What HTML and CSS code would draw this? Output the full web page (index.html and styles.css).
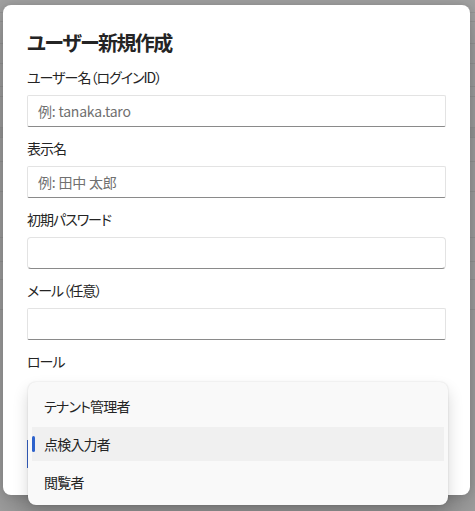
FILE: index.html
```html
<!DOCTYPE html>
<html lang="ja">
<head>
<meta charset="utf-8">
<title>ユーザー新規作成</title>
<link rel="stylesheet" href="styles.css">
</head>
<body>
<div class="page">
  <div class="bg-table">
    <div class="bg-row h13"></div>
    <div class="bg-row h9"></div>
    <div class="bg-row h22"></div>
    <div class="bg-row h20"></div>
    <div class="bg-row h23"></div>
    <div class="bg-row h10"></div>
    <div class="bg-row h31"></div>
    <div class="bg-row h10 dark"></div>
    <div class="bg-row h24"></div>
    <div class="bg-row h30"></div>
    <div class="bg-row h46"></div>
    <div class="bg-row h24"></div>
    <div class="bg-row h18"></div>
    <div class="bg-row h30"></div>
  </div>

  <div class="dialog" role="dialog" aria-label="ユーザー新規作成">
    <h2 class="title">ユーザー新規作成</h2>

    <div class="field">
      <label class="label">ユーザー名（ログインID）</label>
      <div class="input"><span class="placeholder">例: tanaka.taro</span></div>
    </div>

    <div class="field">
      <label class="label">表示名</label>
      <div class="input"><span class="placeholder">例: 田中 太郎</span></div>
    </div>

    <div class="field">
      <label class="label">初期パスワード</label>
      <div class="input rounded"></div>
    </div>

    <div class="field">
      <label class="label">メール（任意）</label>
      <div class="input"></div>
    </div>

    <div class="field">
      <label class="label">ロール</label>
      <div class="dropdown"></div>
    </div>

    <div class="actions">
      <div class="primary-btn" aria-label="作成"></div>
    </div>
  </div>

  <div class="menu" role="listbox">
    <div class="option">テナント管理者</div>
    <div class="option active"><span class="indicator"></span>点検入力者</div>
    <div class="option">閲覧者</div>
  </div>
</div>
</body>
</html>
```

FILE: styles.css
```css
* { box-sizing: border-box; }

html, body {
  margin: 0;
  padding: 0;
}

body {
  width: 475px;
  height: 511px;
  overflow: hidden;
  background: #a1a1a1;
  font-family: "Noto Sans CJK JP", "Noto Sans", sans-serif;
  font-feature-settings: "palt";
  color: #242424;
}

.page {
  position: relative;
  width: 475px;
  height: 511px;
}

.bg-table {
  display: flex;
  flex-direction: column;
}

.bg-row {
  border-bottom: 1px solid #969696;
}
.bg-row.dark { background: #9a9a9a; }
.h9 { height: 9px; }
.h10 { height: 10px; }
.h13 { height: 13px; }
.h18 { height: 18px; }
.h20 { height: 20px; }
.h22 { height: 22px; }
.h23 { height: 23px; }
.h24 { height: 24px; }
.h30 { height: 30px; }
.h31 { height: 31px; }
.h46 { height: 46px; }

.dialog {
  position: absolute;
  left: 3px;
  top: 5px;
  width: 467px;
  height: 490px;
  background: #ffffff;
  border-radius: 8px;
  padding: 24px;
  box-shadow: 0 0 8px rgba(0,0,0,0.12), 0 14px 28px rgba(0,0,0,0.22);
  display: flex;
  flex-direction: column;
}

.title {
  margin: 0 0 10px;
  font-size: 20px;
  line-height: 28px;
  font-weight: 700;
  letter-spacing: -1.6px;
}

.field {
  display: flex;
  flex-direction: column;
  margin-bottom: 11px;
}

.label {
  font-size: 14px;
  line-height: 20px;
  margin-bottom: 8px;
  letter-spacing: -1px;
}

.input {
  height: 32px;
  border: 1px solid #e3e3e3;
  border-bottom-color: #8a8a8a;
  border-radius: 2px;
  display: flex;
  align-items: center;
  padding: 0 10px;
}
.input.rounded { border-radius: 4px; }

.placeholder {
  font-size: 14px;
  color: #707070;
  letter-spacing: -0.2px;
}

.dropdown {
  height: 32px;
}

.actions {
  display: flex;
  margin-top: 18px;
}

.primary-btn {
  width: 96px;
  height: 28px;
  background: #3562c6;
}

.menu {
  position: absolute;
  left: 28px;
  top: 382px;
  width: 420px;
  height: 123px;
  background: #f9f9f9;
  border-radius: 8px;
  padding: 7px 4px 6px;
  display: flex;
  flex-direction: column;
  gap: 4px;
  box-shadow: 0 0 2px rgba(0,0,0,0.14), 0 8px 16px rgba(0,0,0,0.16);
}

.option {
  position: relative;
  height: 34px;
  padding-left: 12px;
  display: flex;
  align-items: center;
  font-size: 14px;
  letter-spacing: -0.8px;
  color: #242424;
}

.option.active {
  background: #f0f0f0;
}

.indicator {
  position: absolute;
  left: 0;
  top: 9px;
  width: 3px;
  height: 16px;
  border-radius: 2px;
  background: #2d62cc;
}
```
